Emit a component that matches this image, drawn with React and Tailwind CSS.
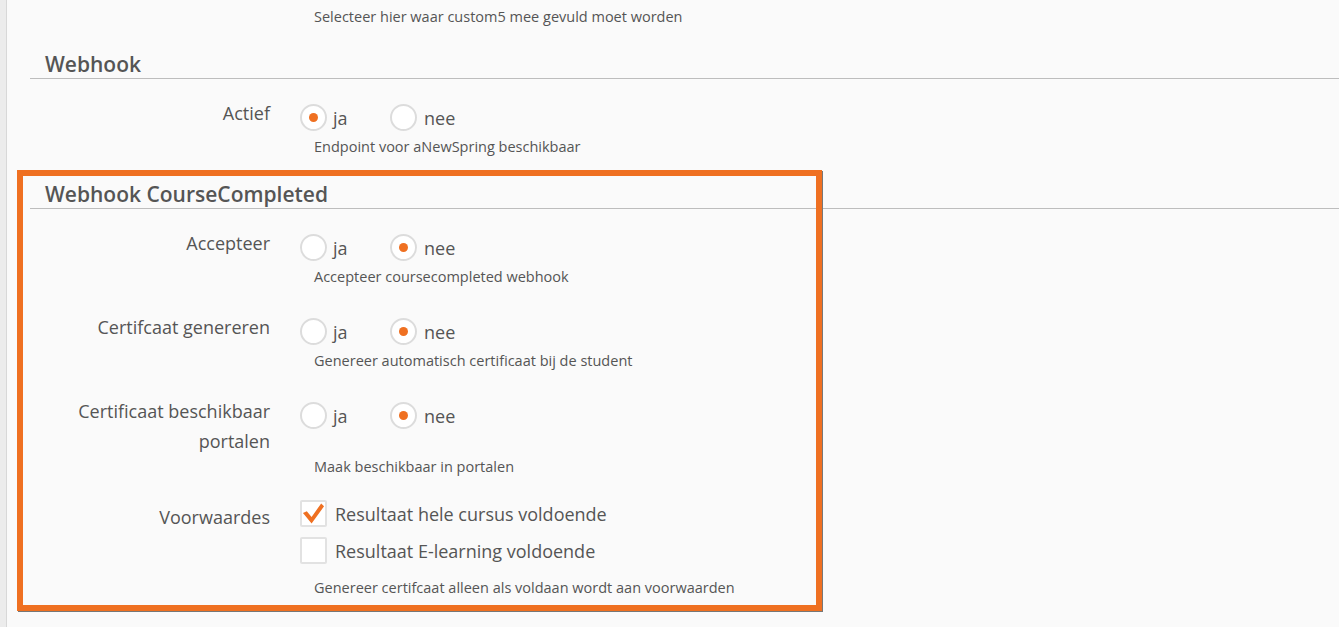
import React from 'react'

function Radio({ checked }) {
  return (
    <span className="w-[27px] h-[27px] rounded-full border-2 border-[#dcdcdc] bg-white flex items-center justify-center shrink-0">
      {checked ? <span className="w-[9px] h-[9px] rounded-full bg-[#ef7021]" /> : null}
    </span>
  )
}

function Check({ checked }) {
  return (
    <span className="w-[27px] h-[27px] rounded-[2px] border-2 border-[#e2e2e2] bg-white flex items-center justify-center shrink-0">
      {checked ? (
        <svg width="24" height="24" viewBox="0 0 24 24">
          <path d="M1 11 L5 9 L10 15 L20 1 L23 4 L10 22 Z" fill="#ef7021" />
        </svg>
      ) : null}
    </span>
  )
}

function YesNo({ value }) {
  return (
    <div className="flex items-center h-[28px]">
      <div className="flex items-center w-[90px]">
        <Radio checked={value === 'ja'} />
        <span className="ml-[6px] text-[18px] leading-[28px] pt-[2px]">ja</span>
      </div>
      <div className="flex items-center">
        <Radio checked={value === 'nee'} />
        <span className="ml-[7px] text-[18px] leading-[28px] pt-[2px]">nee</span>
      </div>
    </div>
  )
}

function Help({ children, className }) {
  return <div className={'pl-[14px] text-[14.5px] leading-[20px] ' + (className || '')}>{children}</div>
}

function Row({ label, className, children }) {
  return (
    <div className={'flex ' + (className || '')}>
      <div className="w-[240px] text-right text-[18px] leading-[30px]">{label}</div>
      <div className="ml-[30px] flex-1">{children}</div>
    </div>
  )
}

function Heading({ children, className }) {
  return (
    <div className={'border-b border-[#bdbdbd] pl-[15px] text-[21px] font-semibold leading-[28px] ' + (className || '')}>
      {children}
    </div>
  )
}

export default function App() {
  return (
    <div
      className="relative flex h-[627px] overflow-hidden bg-[#fafafa] text-[#555]"
      style={{ fontFamily: '"Open Sans", "Liberation Sans", sans-serif' }}
    >
      <div className="w-[7px] shrink-0 bg-[#ececec] border-r border-[#d8d8d8]" />

      <div className="flex-1 pl-[23px] pt-[7px]">
        <Row label="">
          <Help>Selecteer hier waar custom5 mee gevuld moet worden</Help>
        </Row>

        <Heading className="mt-[23px]">Webhook</Heading>

        <Row label="Actief" className="mt-[19px]">
          <div className="pt-[5px]">
            <YesNo value="ja" />
            <Help className="mt-[6px]">Endpoint voor aNewSpring beschikbaar</Help>
          </div>
        </Row>

        <Heading className="mt-[23px]">Webhook CourseCompleted</Heading>

        <Row label="Accepteer" className="mt-[19px]">
          <div className="pt-[5px]">
            <YesNo value="nee" />
            <Help className="mt-[6px]">Accepteer coursecompleted webhook</Help>
          </div>
        </Row>

        <Row label="Certifcaat genereren" className="mt-[25px]">
          <div className="pt-[5px]">
            <YesNo value="nee" />
            <Help className="mt-[6px]">Genereer automatisch certificaat bij de student</Help>
          </div>
        </Row>

        <Row label={<>Certificaat beschikbaar<br />portalen</>} className="mt-[25px]">
          <div className="pt-[5px]">
            <YesNo value="nee" />
            <Help className="mt-[28px]">Maak beschikbaar in portalen</Help>
          </div>
        </Row>

        <div className="flex mt-[23px]">
          <div className="w-[240px] text-right text-[18px] leading-[30px] pt-[2px]">Voorwaardes</div>
          <div className="ml-[30px] flex-1">
            <div className="flex items-center h-[27px]">
              <Check checked />
              <span className="ml-[8px] text-[18px] leading-[27px] pt-[2px]">Resultaat hele cursus voldoende</span>
            </div>
            <div className="flex items-center h-[27px] mt-[10px]">
              <Check />
              <span className="ml-[8px] text-[18px] leading-[27px] pt-[2px]">Resultaat E-learning voldoende</span>
            </div>
            <Help className="mt-[14px]">Genereer certifcaat alleen als voldaan wordt aan voorwaarden</Help>
          </div>
        </div>
      </div>

      <div className="absolute left-[17px] top-[170px] w-[805px] h-[441px] border-[6px] border-[#ef7021] shadow-[1px_1px_0_#777] pointer-events-none" />
    </div>
  )
}
